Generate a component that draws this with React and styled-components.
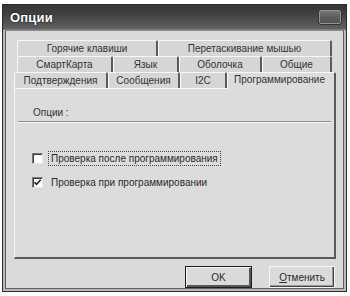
import React from 'react';
import styled, { createGlobalStyle } from 'styled-components';

const GlobalStyle = createGlobalStyle`
  html, body {
    margin: 0;
    padding: 0;
    background: #ffffff;
  }
  body {
    font-family: 'Liberation Sans', Arial, sans-serif;
    font-size: 10px;
    color: #2e2e2e;
  }
`;

const topRow = [
  { label: 'Горячие клавиши', width: 141 },
  { label: 'Перетаскивание мышью', width: 174 },
];

const middleRow = [
  { label: 'СмартКарта', width: 96 },
  { label: 'Язык', width: 66 },
  { label: 'Оболочка', width: 83 },
  { label: 'Общие', width: 70 },
];

const frontRow = [
  { label: 'Подтверждения', width: 94 },
  { label: 'Сообщения', width: 72 },
  { label: 'I2C', width: 47 },
  { label: 'Программирование', width: 109, active: true },
];

const CheckMark = () => (
  <svg width="9" height="9" viewBox="0 0 9 9">
    <path d="M1.5 4.2 L3.6 6.4 L7.6 1.8" fill="none" stroke="#1a1a1a" strokeWidth="1.6" />
  </svg>
);

const App = () => {
  return (
    <>
      <GlobalStyle />
      <Window>
        <TitleBar>
          <Title>Опции</Title>
          <CloseButton />
        </TitleBar>
        <Frame>
          <Client>
            <TabStrip>
              <TabRow $offset={3}>
                {topRow.map((t) => (
                  <Tab key={t.label} $width={t.width}>
                    {t.label}
                  </Tab>
                ))}
              </TabRow>
              <TabRow $offset={3}>
                {middleRow.map((t) => (
                  <Tab key={t.label} $width={t.width}>
                    {t.label}
                  </Tab>
                ))}
              </TabRow>
              <TabRow $offset={0}>
                {frontRow.map((t) => (
                  <Tab key={t.label} $width={t.width} $active={t.active}>
                    {t.label}
                  </Tab>
                ))}
              </TabRow>
            </TabStrip>
            <Panel>
              <GroupLabel>Опции :</GroupLabel>
              <Separator />
              <Options>
                <OptionRow>
                  <CheckBox />
                  <OptionText $focused>Проверка после программирования</OptionText>
                </OptionRow>
                <OptionRow>
                  <CheckBox>
                    <CheckMark />
                  </CheckBox>
                  <OptionText>Проверка при программировании</OptionText>
                </OptionRow>
              </Options>
            </Panel>
            <ButtonBar>
              <Button $default>OK</Button>
              <Button>
                <u>О</u>тменить
              </Button>
            </ButtonBar>
          </Client>
        </Frame>
      </Window>
    </>
  );
};

const Window = styled.div`
  box-sizing: border-box;
  margin: 4px 0 0 2px;
  width: 345px;
  height: 288px;
  border: 1px solid #2c2c2c;
  display: flex;
  flex-direction: column;
  background: #b9b9b9;
`;

const TitleBar = styled.div`
  height: 24px;
  flex-shrink: 0;
  display: flex;
  align-items: center;
  justify-content: space-between;
  padding: 0 4px 0 7px;
  background: linear-gradient(#363636, #404040 35%, #555555 75%, #626262);
  border-bottom: 1px solid #7a7a7a;
`;

const Title = styled.span`
  color: #ffffff;
  font-weight: bold;
  font-size: 13px;
  letter-spacing: 0.2px;
  text-shadow: 0 0 2px #000000;
`;

const CloseButton = styled.div`
  width: 24px;
  height: 16px;
  box-sizing: border-box;
  border: 1px solid #333333;
  border-radius: 3px;
  background: linear-gradient(#7a7a7a, #5e5e5e 50%, #505050);
  box-shadow: inset 0 0 0 1px #959595;
`;

const Frame = styled.div`
  flex: 1;
  display: flex;
  padding: 0 2px 2px;
`;

const Client = styled.div`
  flex: 1;
  display: flex;
  flex-direction: column;
  border: 1px solid #5e5e5e;
  border-top-color: #8a8a8a;
  background: #dadada;
  padding: 9px 7px 0 8px;
`;

const TabStrip = styled.div`
  display: flex;
  flex-direction: column;
`;

const TabRow = styled.div`
  display: flex;
  align-items: flex-end;
  height: 16px;
  padding-left: ${(p) => p.$offset}px;
`;

const Tab = styled.div`
  box-sizing: border-box;
  width: ${(p) => p.$width}px;
  height: ${(p) => (p.$active ? 17 : 16)}px;
  margin-bottom: ${(p) => (p.$active ? -1 : 0)}px;
  position: relative;
  z-index: ${(p) => (p.$active ? 1 : 0)};
  display: flex;
  align-items: center;
  justify-content: ${(p) => (p.$active ? 'flex-start' : 'center')};
  padding-left: ${(p) => (p.$active ? 6 : 0)}px;
  padding-bottom: ${(p) => (p.$active ? 3 : 1)}px;
  background: ${(p) => (p.$active ? '#dcdcdc' : '#d6d6d6')};
  border-top: 1px solid #f8f8f8;
  border-left: 1px solid #f8f8f8;
  border-right: 2px solid #5a5a5a;
  border-radius: 2px 2px 0 0;
  white-space: nowrap;
  color: #333333;
  font-size: 10px;
`;

const Panel = styled.div`
  box-sizing: border-box;
  width: 322px;
  height: 171px;
  display: flex;
  flex-direction: column;
  background: #dcdcdc;
  border-top: 1px solid #f8f8f8;
  border-left: 1px solid #f8f8f8;
  border-right: 2px solid #5a5a5a;
  border-bottom: 2px solid #5a5a5a;
  padding: 18px 3px 0 3px;
`;

const GroupLabel = styled.div`
  padding-left: 15px;
  font-size: 10px;
  color: #333333;
`;

const Separator = styled.div`
  margin-top: 3px;
  height: 0;
  border-top: 1px solid #8c8c8c;
  border-bottom: 1px solid #f8f8f8;
`;

const Options = styled.div`
  display: flex;
  flex-direction: column;
  gap: 8px;
  padding: 27px 0 0 14px;
`;

const OptionRow = styled.div`
  display: flex;
  align-items: center;
  gap: 5px;
  height: 16px;
`;

const CheckBox = styled.div`
  box-sizing: border-box;
  width: 11px;
  height: 11px;
  display: flex;
  align-items: center;
  justify-content: center;
  background: #ffffff;
  border-top: 1px solid #7a7a7a;
  border-left: 1px solid #7a7a7a;
  border-right: 1px solid #e8e8e8;
  border-bottom: 1px solid #e8e8e8;
  box-shadow: inset 1px 1px 0 #3c3c3c;
`;

const OptionText = styled.span`
  padding: 1px 2px;
  border: 1px ${(p) => (p.$focused ? 'dotted #444444' : 'solid transparent')};
  font-size: 10px;
  color: #2a2a2a;
  white-space: nowrap;
`;

const ButtonBar = styled.div`
  display: flex;
  justify-content: flex-end;
  gap: 17px;
  margin-top: 7px;
  padding-right: 1px;
`;

const Button = styled.div`
  box-sizing: border-box;
  width: ${(p) => (p.$default ? 67 : 66)}px;
  height: 22px;
  display: flex;
  align-items: center;
  justify-content: center;
  background: #dadada;
  border: 1px solid ${(p) => (p.$default ? '#1e1e1e' : '#f4f4f4')};
  box-shadow: ${(p) =>
    p.$default
      ? 'inset 1px 1px 0 #f4f4f4, inset -2px -2px 0 #555555'
      : 'inset -1px -1px 0 #444444, inset -2px -2px 0 #999999'};
  font-size: 10px;
  color: #2a2a2a;
  u {
    text-decoration: underline;
  }
`;

export default App;
